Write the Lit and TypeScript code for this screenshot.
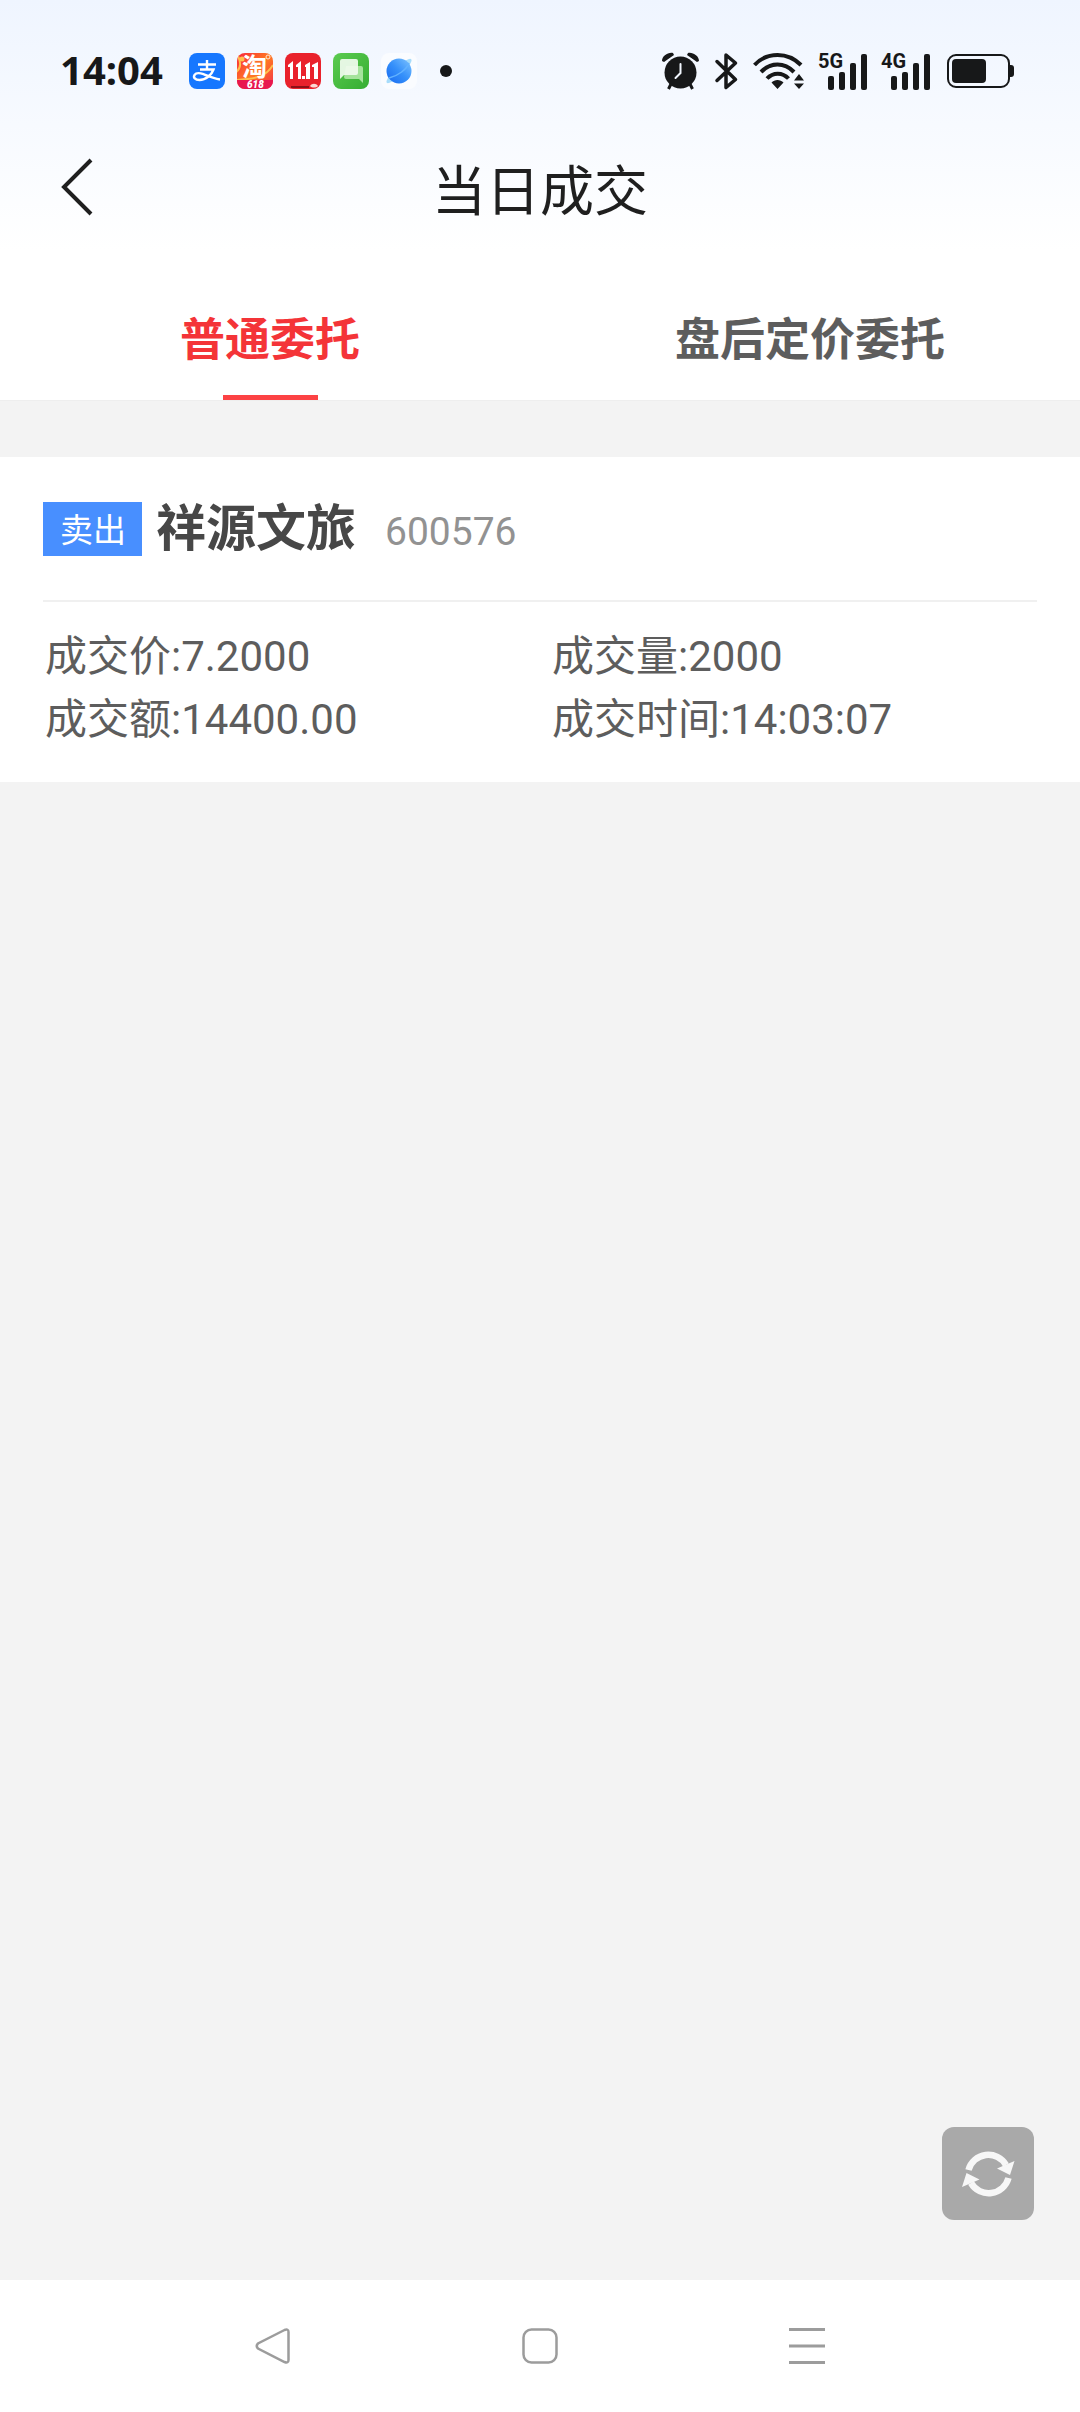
import { LitElement, html, css, svg } from "lit";
import { customElement, property, state } from "lit/decorators.js";

interface Deal {
  side: string;
  name: string;
  code: string;
  fields: { label: string; value: string }[];
}

const DEALS: Deal[] = [
  {
    side: "卖出",
    name: "祥源文旅",
    code: "600576",
    fields: [
      { label: "成交价", value: "7.2000" },
      { label: "成交量", value: "2000" },
      { label: "成交额", value: "14400.00" },
      { label: "成交时间", value: "14:03:07" },
    ],
  },
];

const TABS = ["普通委托", "盘后定价委托"];

@customElement("status-bar")
export class StatusBar extends LitElement {
  static styles = css`
    :host {
      display: flex;
      align-items: center;
      justify-content: space-between;
      height: 142px;
      padding: 0 65px 0 60px;
      color: #171819;
    }
    .group {
      display: flex;
      align-items: center;
      gap: 12px;
    }
    .system {
      gap: 15px;
    }
    .clock {
      margin-right: 14px;
      padding-bottom: 2px;
      font: 700 40px/56px "Noto Sans", sans-serif;
    }
    svg {
      display: block;
      overflow: visible;
    }
    .battery {
      margin-left: 2px;
    }
    .cjk {
      font-family: "Noto Sans CJK SC", sans-serif;
      font-weight: 700;
    }
    .latin {
      font-family: Roboto, sans-serif;
      font-weight: 900;
    }
    .net {
      font-family: "Liberation Sans Narrow", Roboto, sans-serif;
      font-weight: 700;
      font-size: 20px;
    }
  `;

  private signal(label: string) {
    return html`<svg width="48" height="38" viewBox="0 0 48 38" fill="currentColor">
      <text class="net" x="-1" y="16">${label}</text>
      ${svg`<rect x="9" y="24" width="6" height="14" rx="2"/><rect x="20" y="20" width="6" height="18" rx="2"/><rect x="31" y="11" width="6" height="27" rx="2"/><rect x="42" y="2" width="6" height="36" rx="2"/>`}
    </svg>`;
  }

  render() {
    return html`
      <div class="group">
        <time class="clock">14:04</time>
        <svg width="36" height="36" viewBox="0 0 36 36">
          <rect width="36" height="36" rx="8" fill="#1677ff" />
          <path d="M9 11.500h18M18 7v9M11 16.500h13.500C22.500 22 17 27 10.500 27c-4.500 0-6.500-2.500-5-5 1.600-2.400 5.500-2.100 9-.8 4.500 1.800 9.500 4.300 16.500 5.300" fill="none" stroke="#fff" stroke-width="2.400" />
        </svg>
        <svg width="36" height="36" viewBox="0 0 36 36">
          <defs>
            <clipPath id="tile"><rect width="36" height="36" rx="8" /></clipPath>
            <linearGradient id="warm" x2="1" y2="1"><stop stop-color="#f8263c" /><stop offset=".5" stop-color="#ff7a22" /><stop offset="1" stop-color="#f3304c" /></linearGradient>
          </defs>
          <g clip-path="url(#tile)">
            <rect width="36" height="36" fill="url(#warm)" />
            <path d="M-2 20c8-6 5-12 2-20M36 12c-6 10-14 14-36 15" stroke="#ffc04d" stroke-width="2" fill="none" />
            <circle cx="5" cy="6" r="2.500" fill="#ffc04d" />
            <circle cx="31" cy="4" r="2" fill="none" stroke="#ffe9dc" />
            <path d="M0 27h36v9H0z" fill="#e8174f" />
          </g>
          <text class="cjk" x="5" y="23" font-size="25" fill="#fff">淘</text>
          <text class="latin" x="10" y="35" font-size="10" font-style="italic" fill="#fff">618</text>
        </svg>
        <svg width="36" height="36" viewBox="0 0 36 36">
          <rect width="36" height="36" rx="8" fill="#e9222c" />
          <path d="M6 34h18" stroke="#8d1017" stroke-width="2" />
          <path d="M3 12l5-4v18H5V14H3zM11 12l5-4v18h-3V14h-2zM20 12l5-3v17h-4V14h-1zM27 12l6-3v17h-4V14h-2zM17 23h3v3h-3z" fill="#fff" />
          <path d="M25 33c2-3 6-3 8 0-2 2-6 2-8 0z" fill="#fbd9d4" />
        </svg>
        <svg width="36" height="36" viewBox="0 0 36 36">
          <defs><linearGradient id="leaf" x2="1" y2="1"><stop stop-color="#5ccb50" /><stop offset="1" stop-color="#35ad32" /></linearGradient></defs>
          <rect width="36" height="36" rx="8" fill="url(#leaf)" />
          <path d="M13 13h15a2 2 0 0 1 2 2v15l-4-4H13a2 2 0 0 1-2-2z" fill="#a5e39c" />
          <path d="M9 6h14a2 2 0 0 1 2 2v12a2 2 0 0 1-2 2H11l-4 4V8a2 2 0 0 1 2-2z" fill="#f0fbee" fill-opacity=".93" />
        </svg>
        <svg width="36" height="36" viewBox="0 0 36 36">
          <defs><linearGradient id="globe" x1="1" x2="0" y2="1"><stop stop-color="#7fc4ff" /><stop offset=".5" stop-color="#3590fa" /><stop offset="1" stop-color="#1769f0" /></linearGradient></defs>
          <rect width="36" height="36" rx="8" fill="#fafcff" />
          <ellipse cx="18" cy="18" rx="17" ry="4" transform="rotate(-44 18 18)" fill="#a7dcfb" />
          <circle cx="18" cy="18" r="12.500" fill="url(#globe)" />
          <path d="M8 25C17 23 26 16 28 10" stroke="#62b2ff" stroke-width="1.500" fill="none" />
        </svg>
        <svg width="36" height="36" viewBox="0 0 36 36"><circle cx="17" cy="18" r="6" fill="currentColor" /></svg>
      </div>
      <div class="group system">
        <svg width="37" height="38" viewBox="0 0 37 38" fill="currentColor">
          <circle cx="18.500" cy="20.500" r="16" />
          <path d="M0 9C0 4 6 0 11 1L12 3 2 10zM37 9C37 4 31 0 26 1L25 3 35 10z" />
          <path d="M9 32l-2.500 5M28 32l2.500 5" stroke="currentColor" stroke-width="3" />
          <path d="M18.500 12v9l-5 5" stroke="#f2f7ff" stroke-width="2" fill="none" stroke-linecap="round" />
        </svg>
        <svg width="24" height="38" viewBox="0 0 24 38" fill="none" stroke="currentColor" stroke-width="3.500" stroke-linejoin="round" stroke-linecap="round">
          <path d="M3 9.500l18.500 18-9.500 8V3l9.500 8L3 28.500" />
        </svg>
        <svg width="51" height="38" viewBox="0 0 51 38" fill="none" stroke="currentColor" stroke-width="4">
          <path d="M1.500 13C14 -.500 35 -.500 48 13M8 20c9.500-10 23.500-10 33 0M14 26.500c6-6.500 15.500-6.500 21.500 0" />
          <path d="M24.500 37l-6-6.500c3-3.500 9-3.500 12 0zM46 22l5 6.500H41zM46 37l5-5.500H41z" fill="currentColor" stroke="none" />
        </svg>
        ${this.signal("5G")} ${this.signal("4G")}
        <svg class="battery" width="68" height="38" viewBox="0 0 68 38" fill="none">
          <rect x="1" y="3" width="61" height="32" rx="8" stroke="currentColor" stroke-width="2" />
          <rect x="5" y="7" width="34" height="24" rx="4" fill="currentColor" />
          <path d="M63 13h1a3 3 0 0 1 3 3v6a3 3 0 0 1-3 3h-1z" fill="currentColor" />
        </svg>
      </div>
    `;
  }
}

@customElement("deal-card")
export class DealCard extends LitElement {
  @property({ attribute: false }) deal!: Deal;

  static styles = css`
    :host {
      display: block;
      padding: 0 43px 18px;
      background: #fff;
    }
    .head {
      display: flex;
      align-items: center;
      height: 143px;
      border-bottom: 2px solid #f0f0f0;
    }
    .side {
      padding: 4px 16px 0 17px;
      background: #488fff;
      color: #fff;
      font-size: 33px;
      line-height: 50px;
    }
    .name {
      margin: 0 29px 0 14px;
      color: #474747;
      font-size: 50px;
      line-height: 72px;
      font-weight: 700;
    }
    .code {
      padding-top: 6px;
      color: #929292;
      font-size: 39px;
      line-height: 54px;
    }
    .fields {
      display: grid;
      grid-template-columns: 1fr 1fr;
      column-gap: 24px;
      margin: 0;
      padding: 23px 2px 13px;
      color: #5d5d5d;
      font-size: 42px;
      line-height: 63px;
    }
    .field {
      display: flex;
    }
    dt,
    dd {
      margin: 0;
    }
  `;

  render() {
    const { side, name, code, fields } = this.deal;
    return html`
      <div class="head">
        <span class="side">${side}</span>
        <h2 class="name">${name}</h2>
        <span class="code">${code}</span>
      </div>
      <dl class="fields">
        ${fields.map((f) => html`<div class="field"><dt>${f.label}:</dt><dd>${f.value}</dd></div>`)}
      </dl>
    `;
  }
}

@customElement("app-root")
export class AppRoot extends LitElement {
  @state() private active = 0;

  static styles = css`
    :host {
      display: flex;
      flex-direction: column;
      min-height: 100vh;
      background: #f3f3f3;
      font-family: Roboto, "Noto Sans CJK SC", sans-serif;
    }
    button {
      margin: 0;
      padding: 0;
      border: 0;
      background: none;
      font: inherit;
      cursor: pointer;
    }
    svg {
      display: block;
    }
    .top {
      background: linear-gradient(#eff5ff, #fff 250px);
      border-bottom: 1px solid #eee;
    }
    .bar {
      display: grid;
      grid-template-columns: 96px 1fr 96px;
      align-items: start;
      height: 96px;
      padding: 0 30px;
    }
    .back {
      display: grid;
      place-items: center;
      height: 90px;
    }
    .title {
      margin: 0;
      padding-top: 11px;
      color: #1f1f1f;
      font-size: 54px;
      line-height: 80px;
      font-weight: 400;
      text-align: center;
    }
    .tabs {
      display: grid;
      grid-template-columns: 1fr 1fr;
    }
    .tab {
      display: flex;
      flex-direction: column;
      align-items: center;
      gap: 21px;
      padding-top: 70px;
      color: #5d5d5d;
      font-size: 45px;
      line-height: 66px;
      font-weight: 700;
    }
    .tab::after {
      content: "";
      width: 95px;
      height: 5px;
    }
    .tab.on {
      color: #f43438;
    }
    .tab.on::after {
      background: #fc4244;
    }
    .list {
      display: flex;
      flex: 1;
      flex-direction: column;
      padding: 56px 0 60px;
    }
    .refresh {
      display: grid;
      place-items: center;
      width: 92px;
      height: 93px;
      margin: auto 46px 0 auto;
      border-radius: 12px;
      background: #a9a9a9;
    }
    .nav {
      display: flex;
      align-items: center;
      justify-content: center;
      gap: 231px;
      height: 132px;
      background: #fff;
    }
  `;

  render() {
    return html`
      <header class="top">
        <status-bar></status-bar>
        <div class="bar">
          <button class="back" aria-label="返回">
            <svg width="36" height="60" viewBox="0 0 36 60" fill="none" stroke="#1f1f1f" stroke-width="4"><path d="M31 3L4 30 31 57" /></svg>
          </button>
          <h1 class="title">当日成交</h1>
        </div>
        <div class="tabs" role="tablist">
          ${TABS.map(
            (t, i) => html`<button
              role="tab"
              class="tab ${i === this.active ? "on" : ""}"
              aria-selected=${i === this.active}
              @click=${() => (this.active = i)}
            >${t}</button>`
          )}
        </div>
      </header>
      <main class="list">
        ${DEALS.map((d) => html`<deal-card .deal=${d}></deal-card>`)}
        <button class="refresh" aria-label="刷新">
          <svg width="54" height="50" viewBox="0 0 54 50" fill="none" stroke="#f7f7f7" stroke-width="6.500">
            <path d="M7.500 21A20.500 20.500 0 0 1 45 16M47.500 29A20.500 20.500 0 0 1 10 34" />
            <path d="M53.500 12L49 26 36 19.500zM1 38L5.500 24l13 6.500z" fill="#f7f7f7" stroke="none" />
          </svg>
        </button>
      </main>
      <nav class="nav">
        <button aria-label="后退">
          <svg width="36" height="36" viewBox="0 0 36 36" fill="none" stroke="#9c9c9c" stroke-width="2.500"><path d="M29.500 2L3 15.500Q.500 18 3 20.500L29.500 34Q33.500 35.500 33.500 32V4Q33.500 .500 29.500 2z" /></svg>
        </button>
        <button aria-label="主页">
          <svg width="36" height="36" viewBox="0 0 36 36" fill="none" stroke="#9c9c9c" stroke-width="2.500"><rect x="1.500" y="1.500" width="33" height="33" rx="8" /></svg>
        </button>
        <button aria-label="菜单">
          <svg width="36" height="36" viewBox="0 0 36 36" stroke="#9c9c9c" stroke-width="3"><path d="M0 1.500h36M0 18h36M0 34.500h36" /></svg>
        </button>
      </nav>
    `;
  }
}
